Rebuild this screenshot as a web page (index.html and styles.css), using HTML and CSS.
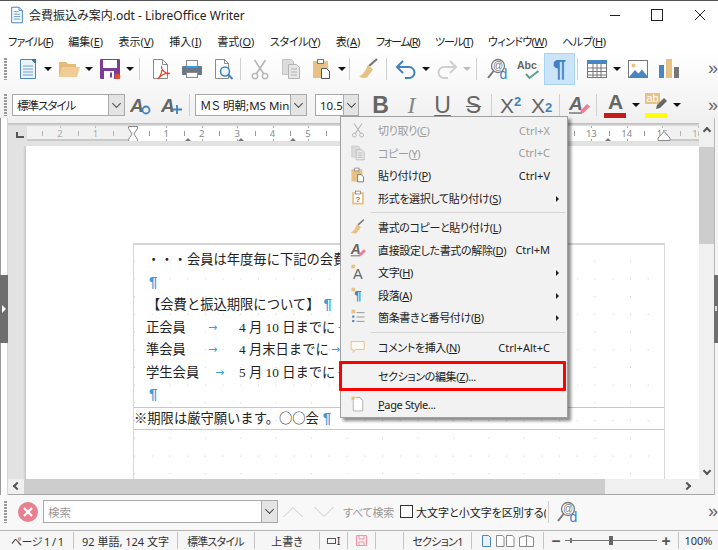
FILE: index.html
```html
<!DOCTYPE html>
<html lang="ja">
<head>
<meta charset="utf-8">
<title>会費振込み案内.odt - LibreOffice Writer</title>
<link rel="stylesheet" href="styles.css">
</head>
<body>
<svg class="defs" width="0" height="0" aria-hidden="true">
  <symbol id="i-new" viewBox="0 0 22 22"><path d="M3.5 1.5h11l4 4v15h-15z" fill="#eaf2fa" stroke="#4a86c0"/><path d="M14 1h5v5z" fill="#3b74ae"/><path d="M6 8h10M6 11h10M6 14h10M6 17h10" stroke="#6f9ecb" fill="none"/></symbol>
  <symbol id="i-open" viewBox="0 0 22 22"><path d="M1 4h7l2 2h8v13H1z" fill="#e6bb7a"/><path d="M4 9h18l-3 10H1z" fill="#f0cd96"/></symbol>
  <symbol id="i-save" viewBox="0 0 22 22"><rect x="1" y="1" width="20" height="20" rx="1" fill="#7c3e95"/><rect x="4" y="2" width="14" height="8" fill="#fff"/><rect x="5" y="13" width="10" height="8" fill="#fff"/><rect x="11" y="14.500" width="2" height="5" fill="#7c3e95"/><circle cx="18.500" cy="18.500" r="2.800" fill="#e2502a"/></symbol>
  <symbol id="i-pdf" viewBox="0 0 22 22"><path d="M3.500 1.500h9l5 5v14h-14z" fill="#fff" stroke="#8a8a8a"/><path d="M12.500 1.500v5h5" fill="none" stroke="#8a8a8a"/><path d="M8 21C13 15 12 10 11.500 9 11 11 15 16 20 15.500 15 15 11 17 8 21z" fill="none" stroke="#d9492c" stroke-width="1.200"/></symbol>
  <symbol id="i-print" viewBox="0 0 22 22"><rect x="5.500" y="2.500" width="11" height="7" fill="#fff" stroke="#8a8a8a"/><rect x="1" y="8" width="20" height="9" rx="1" fill="#6a7985"/><rect x="5" y="8" width="12" height="2" fill="#3f9bd8"/><rect x="5.500" y="14.500" width="11" height="5" fill="#fff" stroke="#8a8a8a"/></symbol>
  <symbol id="i-prev" viewBox="0 0 22 22"><path d="M3.500 1.500h9l4 4v15h-13z" fill="#fff" stroke="#8a8a8a"/><path d="M12.500 1.500v4h4" fill="none" stroke="#8a8a8a"/><circle cx="13" cy="13.500" r="4.500" fill="#eef6fc" stroke="#3f82c4" stroke-width="1.500"/><path d="M16.500 17l4 4" stroke="#3f82c4" stroke-width="2"/></symbol>
  <symbol id="i-cut" viewBox="0 0 22 22"><circle cx="6" cy="18" r="2.700" fill="none" stroke="#b4b4b4" stroke-width="1.300"/><circle cx="16" cy="18" r="2.700" fill="none" stroke="#b4b4b4" stroke-width="1.300"/><path d="M7.500 15.500L16.500 2M14.500 15.500L5.500 2" stroke="#b4b4b4" stroke-width="1.500"/></symbol>
  <symbol id="i-copy" viewBox="0 0 22 22"><path d="M2.500 1.500h9l2 2v13h-11z" fill="#dcdcdc" stroke="#c4c4c4"/><path d="M8.500 6.500h8l3 3v11h-11z" fill="#e6e6e6" stroke="#b4b4b4"/><path d="M11 11h6M11 14h6M11 17h6" stroke="#b4b4b4"/></symbol>
  <symbol id="i-paste" viewBox="0 0 22 22"><rect x="2" y="3" width="15" height="17" fill="#e8c185"/><rect x="6.500" y="1.500" width="6" height="4" fill="#fff" stroke="#777"/><path d="M10.500 10.500h5l3 3v7h-8z" fill="#fff" stroke="#555"/></symbol>
  <symbol id="i-brush" viewBox="0 0 22 22"><path d="M19 1l-8 7" stroke="#777" stroke-width="2.200" fill="none"/><path d="M10 6.500l5 5-6 8c-3 1-7 .5-8-1.500 3 0 6-4 9-11.500z" fill="#e8c185"/></symbol>
  <symbol id="i-undo" viewBox="0 0 22 22"><path d="M8 3L2 9l6 6M2 9h12a5.500 5.500 0 0 1 0 11h-4" fill="none" stroke="#3f82c4" stroke-width="2"/></symbol>
  <symbol id="i-redo" viewBox="0 0 22 22"><path d="M14 3l6 6-6 6M20 9H8a5.500 5.500 0 0 0 0 11h4" fill="none" stroke="#cfcfcf" stroke-width="2"/></symbol>
  <symbol id="i-table" viewBox="0 0 22 22"><rect x="1.500" y="2.500" width="19" height="17" fill="#fff" stroke="#777"/><rect x="1" y="2" width="20" height="4" fill="#4a86c0"/><path d="M1 10h20M1 13.500h20M1 17h20M7 6v13M11 6v13M15 6v13" stroke="#777" fill="none"/></symbol>
  <symbol id="i-image" viewBox="0 0 22 22"><rect x="1.500" y="2.500" width="19" height="17" fill="#fff" stroke="#777"/><circle cx="6.500" cy="7.500" r="2" fill="#e8c185"/><path d="M2 19l6-7 3.500 3.500 3.500-4 6 7.500z" fill="#4a86c0"/></symbol>
  <symbol id="i-chart" viewBox="0 0 22 22"><rect x="1" y="7" width="5" height="13" fill="#4a86c0"/><rect x="8" y="1" width="6" height="19" fill="#e8c185"/><rect x="16" y="9" width="5" height="11" fill="#777"/></symbol>
  <symbol id="i-list" viewBox="0 0 22 22"><rect x="2" y="1" width="5" height="5" fill="#e8c185"/><path d="M9 5h11M9 11h11M9 17h11" stroke="#777"/><rect x="3" y="9" width="3" height="3" fill="#4a86c0"/><rect x="3" y="15" width="3" height="3" fill="#4a86c0"/></symbol>
  <symbol id="i-note" viewBox="0 0 22 22"><path d="M1.500 3.500h18v11h-12l-3 4v-4h-3z" fill="#fdfaf3" stroke="#e8c185" stroke-width="1.300"/></symbol>
  <symbol id="i-page" viewBox="0 0 22 22"><rect x="2" y="1" width="5" height="5" fill="#e8c185"/><path d="M4.500 6.500v14h13v-14l-4-4.500h-6" fill="#fff" stroke="#999"/></symbol>
  <symbol id="i-doc" viewBox="0 0 22 22"><path d="M4.500 1.500h9l4 4v15h-13z" fill="#fff" stroke="#3f82c4" stroke-width="1.200"/><path d="M13.500 1.500v4h4" fill="#bcd7ef" stroke="#3f82c4"/><path d="M7 7h6M7 10h8M7 13h8M7 16h8" stroke="#3f82c4"/></symbol>
</svg>

<div class="win">
  <header class="title">
    <svg class="title-ic"><use href="#i-doc"/></svg>
    <span class="title-text">会費振込み案内.odt - LibreOffice Writer</span>
    <div class="winctl">
      <span class="wc wc-min"></span>
      <span class="wc wc-max"></span>
      <span class="wc wc-close">
        <svg width="12" height="12" viewBox="0 0 12 12"><path d="M1 1l10 10M11 1L1 11" stroke="#222" fill="none"/></svg>
      </span>
    </div>
  </header>

  <nav class="menubar">
    <span class="k8">ファイル(<u>F</u>)</span><span>編集(<u>E</u>)</span><span>表示(<u>V</u>)</span><span>挿入(<u>I</u>)</span><span>書式(<u>O</u>)</span><span class="k3">スタイル(<u>Y</u>)</span><span>表(<u>A</u>)</span><span class="k12">フォーム(<u>R</u>)</span><span class="k11">ツール(<u>T</u>)</span><span class="k6">ウィンドウ(<u>W</u>)</span><span class="k5">ヘルプ(<u>H</u>)</span>
  </nav>

  <div class="bars">
    <div class="toolbar t1">
      <i class="grip"></i>
      <span class="ic"><svg><use href="#i-new"/></svg></span><b class="ar"></b>
      <span class="ic"><svg><use href="#i-open"/></svg></span><b class="ar"></b>
      <span class="ic"><svg><use href="#i-save"/></svg></span><b class="ar"></b>
      <i class="sep wide"></i>
      <span class="ic"><svg><use href="#i-pdf"/></svg></span>
      <span class="ic"><svg><use href="#i-print"/></svg></span>
      <span class="ic"><svg><use href="#i-prev"/></svg></span>
      <i class="sep"></i>
      <span class="ic"><svg><use href="#i-cut"/></svg></span>
      <span class="ic"><svg><use href="#i-copy"/></svg></span>
      <span class="ic"><svg><use href="#i-paste"/></svg></span><b class="ar"></b>
      <i class="sep"></i>
      <span class="ic"><svg><use href="#i-brush"/></svg></span>
      <i class="sep"></i>
      <span class="ic"><svg><use href="#i-undo"/></svg></span><b class="ar"></b>
      <span class="ic"><svg><use href="#i-redo"/></svg></span><b class="ar dis"></b>
      <i class="sep wide"></i>
      <span class="ic"><svg viewBox="0 0 22 22"><circle cx="11" cy="8" r="6.500" fill="#fff" stroke="#777" stroke-width="1.300"/><path d="M6.500 13L1 20" stroke="#777" stroke-width="2"/><text x="11" y="11" text-anchor="middle" class="svg-at">@</text><text x="16.500" y="21" text-anchor="middle" class="svg-d">d</text></svg></span>
      <span class="ic"><svg class="wide-ic" viewBox="0 0 24 22"><text x="0" y="11" class="svg-abc">Abc</text><path d="M9 16l3.500 4 9-7" fill="none" stroke="#5aa08a" stroke-width="2"/></svg></span>
      <span class="ic on"><span class="pil">¶</span></span>
      <i class="sep"></i>
      <span class="ic"><svg><use href="#i-table"/></svg></span><b class="ar"></b>
      <span class="ic"><svg><use href="#i-image"/></svg></span>
      <span class="ic"><svg><use href="#i-chart"/></svg></span>
      <span class="more">»</span>
    </div>
    <div class="toolbar t2">
      <i class="grip"></i>
      <div class="combo c-style"><span class="combo-t">標準スタイル</span><span class="combo-b"></span></div>
      <span class="ic"><svg viewBox="0 0 22 22"><text x="0" y="18" class="svg-a">A</text><circle cx="16" cy="16" r="3.500" fill="none" stroke="#3f82c4" stroke-width="1.800"/></svg></span>
      <span class="ic"><svg viewBox="0 0 22 22"><text x="0" y="18" class="svg-a">A</text><path d="M16 11v9M12 15.500h9" stroke="#3f82c4" stroke-width="1.800"/></svg></span>
      <i class="sep"></i>
      <div class="combo c-font"><span class="combo-t">ＭＳ 明朝;MS Mincho</span><span class="combo-b"></span></div>
      <div class="combo c-size"><span class="combo-t">10.5</span><span class="combo-b"></span></div>
      <span class="ic fmt f-b">B</span>
      <span class="ic fmt f-i">I</span>
      <span class="ic fmt f-u">U</span>
      <span class="ic fmt f-s">S</span>
      <i class="sep"></i>
      <span class="ic fmt f-x">X<sup>2</sup></span>
      <span class="ic fmt f-x">X<sub>2</sub></span>
      <i class="sep"></i>
      <span class="ic"><svg viewBox="0 0 22 22"><text x="1" y="16" class="svg-a">A</text><path d="M1 19h13" stroke="#666" stroke-width="1.300"/><path d="M12 17l7-7 3 2.500-7 7z" fill="#ef7d92"/></svg></span>
      <i class="sep"></i>
      <span class="ic colorbtn"><span class="fc">A</span><span class="bar bar-red"></span></span><b class="ar"></b>
      <span class="ic colorbtn"><span class="hl">ab</span><svg class="pen" width="14" height="14" viewBox="0 0 14 14"><path d="M2 12l1-4 7-7 3 3-7 7z" fill="#666"/></svg><span class="bar bar-yel"></span></span><b class="ar"></b>
      <span class="more">»</span>
    </div>
  </div>

  <div class="work">
    <div class="edge edge-l"><span class="hand"><span class="tri-r"></span></span></div>
    <div class="center">
      <div class="upper">
        <div class="doccol">
          <div class="rulerrow">
            <span class="corner"></span>
            <div class="ruler">
              <span class="rc">2</span><span class="rc">1</span><span class="rc z"></span><span class="rc">1</span><span class="rc">2</span><span class="rc">3</span><span class="rc">4</span><span class="rc">5</span><span class="rc"></span><span class="rc"></span><span class="rc"></span><span class="rc"></span><span class="rc"></span><span class="rc"></span><span class="rc"></span><span class="rc">13</span><span class="rc">14</span><span class="rc">15</span><span class="rc">16</span>
              <span class="rmask rmask-l"></span><span class="rmask rmask-r"></span>
              <svg class="rmark rm-hour" width="10" height="16" viewBox="0 0 10 16"><path d="M.5.5h9v2L6 8l3.500 5.500v2h-9v-2L4 8 .5 2.500z" fill="#fff" stroke="#888"/></svg>
              <span class="tab t-a"></span><span class="tab t-b"></span><span class="tab t-c"></span><span class="tab t-d"></span>
              <svg class="rmark rm-right" width="14" height="10" viewBox="0 0 14 10"><path d="M1 9.500V7L7 .5 13 7v2.500z" fill="#fff" stroke="#888"/></svg>
            </div>
          </div>
          <div class="pagerow">
            <div class="gutter"></div>
            <div class="page">
              <div class="frame">
                <svg class="dots" width="100%" height="100%">
                  <defs>
                    <pattern id="dotgrid" width="35.43" height="35.43" patternUnits="userSpaceOnUse">
                      <rect x="0" y="0" width="1" height="1" fill="#c9c9c9"/><rect x="17.71" y="0" width="1" height="1" fill="#c9c9c9"/><rect x="0" y="17.71" width="1" height="1" fill="#c9c9c9"/>
                    </pattern>
                  </defs>
                  <rect width="100%" height="100%" fill="url(#dotgrid)"/>
                </svg>
                <section class="body">
                  <p class="ln ind">・・・会員は年度毎に下記の会費</p>
                  <p class="ln ind pad"><span class="pm">¶</span></p>
                  <p class="ln ind">【会費と振込期限について】<span class="pm sp">¶</span></p>
                  <p class="ln row"><span class="lab">正会員</span><span class="arr">→</span><span>4 月 10 日までに</span><span class="arr2">→</span></p>
                  <p class="ln row"><span class="lab">準会員</span><span class="arr">→</span><span>4 月末日までに</span><span class="arr2">→</span></p>
                  <p class="ln row"><span class="lab lab-w">学生会員</span><span class="arr arr-n">→</span><span>5 月 10 日までに</span><span class="arr2">→</span></p>
                  <p class="ln ind pad"><span class="pm">¶</span></p>
                </section>
                <footer class="foot">※期限は厳守願います。<span class="cjk">○○</span>会<span class="pm sp">¶</span></footer>
              </div>
            </div>
          </div>
        </div>
        <div class="vscroll">
          <span class="chev up"></span>
          <span class="vthumb"></span>
          <span class="chev down"></span>
        </div>
      </div>
      <div class="hscroll">
        <span class="hend"><span class="chev left"></span></span>
        <span class="hthumb"></span>
        <span class="hrest"><span class="chev right"></span></span>
      </div>
    </div>
    <div class="edge edge-r"><span class="hand"><span class="tri-dot"></span></span></div>
  </div>

  <div class="findbar">
    <i class="grip"></i>
    <span class="closex"><svg width="20" height="20" viewBox="0 0 20 20"><circle cx="10" cy="10" r="10" fill="#e9808f"/><path d="M6 6l8 8M14 6l-8 8" stroke="#fff" stroke-width="2.200"/></svg></span>
    <div class="combo c-find"><span class="combo-t ph">検索</span><span class="combo-b"></span></div>
    <svg class="nav nav-a" width="20" height="12" viewBox="0 0 20 12"><path d="M.5 11L10 1.500 19.500 11" fill="none" stroke="#c8c8c8"/></svg>
    <svg class="nav nav-b" width="20" height="12" viewBox="0 0 20 12"><path d="M.5 1L10 10.500 19.500 1" fill="none" stroke="#c8c8c8"/></svg>
    <span class="findall">すべて検索</span>
    <span class="check"></span>
    <span class="matchcase">大文字と小文字を区別する(</span>
    <i class="sep"></i>
    <span class="ic ic-find"><svg viewBox="0 0 22 22"><circle cx="11" cy="8" r="6.500" fill="#fff" stroke="#777" stroke-width="1.300"/><path d="M6.500 13L1 20" stroke="#777" stroke-width="2"/><text x="11" y="11" text-anchor="middle" class="svg-at">@</text><text x="16.500" y="21" text-anchor="middle" class="svg-d">d</text></svg></span>
    <span class="more">»</span>
  </div>

  <footer class="status">
    <span class="st s1">ページ 1 / 1</span>
    <span class="st s2">92 単語, 124 文字</span>
    <span class="st s3">標準スタイル</span>
    <span class="st s4">上書き</span>
    <span class="st s5"><span class="sel-a"></span><span class="sel-b">I</span></span>
    <span class="st s6"><svg width="11" height="11" viewBox="0 0 11 11"><path d="M.5.500h10v10H.5z" fill="#fdeef1" stroke="#ef95a8"/><path d="M3 1v3h5V1M3 10V7h5v3" fill="none" stroke="#ef95a8"/></svg></span>
    <span class="st s7"></span>
    <span class="st s8">セクション1</span>
    <span class="st s9">
      <svg width="54" height="12" viewBox="0 0 54 12"><path d="M1.500.500h6l2 2v9h-8z" fill="#eaf2fa" stroke="#4a86c0"/><path d="M15.500.500h6l1.500 2v9h-7.500zM25.500.500h6l1.500 2v9h-7.500z" fill="#fff" stroke="#888"/><path d="M38.500 2.500l7-2v11h-7zM45.500.500l7 2v9l-7 0z" fill="#fff" stroke="#888"/></svg>
    </span>
    <span class="st s10">
      <span class="zm">−</span>
      <span class="slider"><span class="sl-tick"></span><span class="sl-thumb"></span></span>
      <span class="zm">+</span>
    </span>
    <span class="st s11">100%</span>
  </footer>

  <div class="ctx">
    <div class="mi dis"><svg class="mic"><use href="#i-cut"/></svg><span class="ml">切り取り(<u>C</u>)</span><span class="ms">Ctrl+X</span></div>
    <div class="mi dis"><svg class="mic"><use href="#i-copy"/></svg><span class="ml">コピー(<u>Y</u>)</span><span class="ms">Ctrl+C</span></div>
    <div class="mi"><svg class="mic"><use href="#i-paste"/></svg><span class="ml">貼り付け(<u>P</u>)</span><span class="ms">Ctrl+V</span></div>
    <div class="mi sub"><svg class="mic" viewBox="0 0 22 22"><rect x="3" y="3" width="16" height="17" fill="#e8c185"/><rect x="5.500" y="5.500" width="11" height="12" fill="#fff"/><rect x="7.500" y="1.500" width="7" height="4" fill="#fff" stroke="#777"/><text x="11" y="16.500" text-anchor="middle" class="svg-q">?</text></svg><span class="ml">形式を選択して貼り付け(<u>S</u>)</span></div>
    <div class="msep"></div>
    <div class="mi"><svg class="mic"><use href="#i-brush"/></svg><span class="ml">書式のコピーと貼り付け(<u>L</u>)</span></div>
    <div class="mi"><svg class="mic" viewBox="0 0 22 22"><text x="1" y="16" class="svg-a">A</text><path d="M1 19h13" stroke="#666" stroke-width="1.300"/><path d="M12 17l7-7 3 2.500-7 7z" fill="#ef7d92"/></svg><span class="ml">直接設定した書式の解除(<u>D</u>)</span><span class="ms">Ctrl+M</span></div>
    <div class="mi sub"><svg class="mic" viewBox="0 0 22 22"><rect x="2" y="1" width="5" height="5" fill="#e8c185"/><text x="4" y="20" class="svg-ch">A</text></svg><span class="ml">文字(<u>H</u>)</span></div>
    <div class="mi sub"><svg class="mic" viewBox="0 0 22 22"><rect x="2" y="1" width="5" height="5" fill="#e8c185"/><text x="6" y="18" class="svg-pa">¶</text></svg><span class="ml">段落(<u>A</u>)</span></div>
    <div class="mi sub"><svg class="mic"><use href="#i-list"/></svg><span class="ml">箇条書きと番号付け(<u>B</u>)</span></div>
    <div class="msep msep2"></div>
    <div class="mi"><svg class="mic"><use href="#i-note"/></svg><span class="ml">コメントを挿入(<u>N</u>)</span><span class="ms">Ctrl+Alt+C</span></div>
    <div class="msep msep3"></div>
    <div class="mi"><span class="mic"></span><span class="ml">セクションの編集(<u>Z</u>)...</span></div>
    <div class="msep msep3"></div>
    <div class="mi"><svg class="mic"><use href="#i-page"/></svg><span class="ml"><u>P</u>age Style...</span></div>
  </div>
  <div class="redbox"></div>
</div>
</body>
</html>
```
FILE: styles.css
```css
* { box-sizing: border-box; }
html, body { margin: 0; padding: 0; }
body {
  width: 718px; height: 550px; overflow: hidden; background: #fff; color: #222;
  font-family: "Noto Sans", "Noto Sans CJK JP", sans-serif;
  font-size: 11px; font-feature-settings: "palt";
}
.defs { position: absolute; }
.svg-q { font: bold 11px "Liberation Sans", sans-serif; fill: #d9492c; }
.svg-at { font: 10px "Liberation Sans", sans-serif; fill: #777; }
.svg-d { font: 14px "Liberation Sans", sans-serif; fill: #3f82c4; }
.svg-abc { font: bold 10.5px "Liberation Sans", sans-serif; fill: #666; }
.svg-a { font: italic bold 19px "Liberation Sans", sans-serif; fill: #666; }
.svg-ch { font: 20px "Liberation Sans", sans-serif; fill: #666; }
.svg-pa { font: bold 18px "Liberation Sans", sans-serif; fill: #3f82c4; }

.win { position: relative; width: 718px; height: 550px; display: flex; flex-direction: column; border-top: 1px solid #555; overflow: hidden; }

/* title */
.title { height: 28px; display: flex; align-items: center; padding-left: 8px; background: #fff; flex: none; }
.title-ic { width: 18px; height: 20px; margin-right: 3px; flex: none; }
.title-text { font-size: 12px; color: #222; }
.winctl { margin-left: auto; margin-right: -3px; display: flex; height: 26px; }
.wc { width: 42.500px; display: flex; align-items: center; justify-content: center; }
.wc-min::before { content: ""; width: 10px; height: 1px; background: #222; }
.wc-max::before { content: ""; width: 10px; height: 10px; border: 1px solid #222; }

/* menu */
.menubar { height: 23px; flex: none; display: flex; align-items: center; gap: 15.500px; padding-left: 8px; background: #fff; font-size: 11px; }
.k3 { letter-spacing: -.3px; }
.k5 { letter-spacing: -.5px; }
.k6 { letter-spacing: -.6px; }
.k8 { letter-spacing: -.8px; }
.k11 { letter-spacing: -1.1px; }
.k12 { letter-spacing: -1.200px; }

/* toolbars */
.bars { flex: none; height: 66px; background: linear-gradient(#fff, #f1f1f1); display: flex; flex-direction: column; }
.toolbar { display: flex; align-items: center; padding-left: 4px; }
.t1 { height: 36px; padding-bottom: 3px; }
.t2 { height: 30px; padding-top: 4px; }
.grip { width: 3px; height: 22px; margin-right: 5px; flex: none; background: repeating-linear-gradient(#9a9a9a 0 2px, transparent 2px 3px); }
.ic { width: 31px; height: 26px; flex: none; display: flex; align-items: center; justify-content: center; position: relative; }
.ic svg { width: 22px; height: 22px; }
.ic .wide-ic { width: 24px; }
.on { height: 32px; background: #cce4f7; border: 1px solid #a8d3f5; }
.pil { font: bold 24px "Liberation Sans", sans-serif; color: #3f82c4; line-height: 1; }
.ar { width: 10px; height: 10px; flex: none; position: relative; display: block; }
.ar::before { content: ""; position: absolute; left: 1px; top: 3px; border: 4px solid transparent; border-top-color: #111; border-bottom: 0; }
.ar.dis::before { border-top-color: #bbb; }
.sep { width: 6px; height: 22px; flex: none; position: relative; display: block; }
.sep::before { content: ""; position: absolute; left: 2px; top: 0; bottom: 0; width: 1px; background: #d0d0d0; }
.sep.wide { width: 10px; }
.sep.wide::before { left: 4px; }
.more { margin-left: auto; margin-right: -3px; font: 18px "Liberation Sans", sans-serif; color: #666; width: 13px; }

.combo { height: 22px; display: flex; align-items: center; border: 1px solid #a9a9a9; background: #fff; flex: none; font-size: 11.500px; }
.combo-t { flex: 1; min-width: 0; overflow: hidden; white-space: nowrap; padding-left: 4px; }
.combo-b { width: 16px; height: 20px; flex: none; position: relative; background: #e4e4e4; border-left: 1px solid #a9a9a9; }
.combo-b::before { content: ""; position: absolute; left: 4px; top: 5px; width: 6px; height: 6px; border-right: 1px solid #444; border-bottom: 1px solid #444; transform: rotate(45deg) scale(.9); }
.c-style { width: 113px; }
.c-style .combo-t { letter-spacing: -1px; }
.c-font { width: 112px; margin-left: 2px; }
.c-size { width: 44px; margin-left: 8px; margin-right: 6px; }
.c-size .combo-b { width: 15px; }
.fmt { font-family: "Liberation Sans", sans-serif; color: #666; font-size: 23px; line-height: 1; }
.f-b { font-weight: bold; }
.f-i { font-family: "Liberation Serif", serif; font-style: italic; font-size: 24px; color: #888; }
.f-u { text-decoration: underline; text-decoration-thickness: 2px; text-underline-offset: 2px; }
.f-s { text-decoration: line-through; text-decoration-thickness: 1px; }
.f-x { font-size: 21px; }
.f-x sup, .f-x sub { font-size: 13px; color: #3f82c4; font-weight: bold; line-height: 0; }
.f-x sup { position: relative; top: -3px; vertical-align: super; }
.f-x sub { vertical-align: sub; position: relative; top: 3px; }
.colorbtn { flex-direction: column; justify-content: flex-start; height: 26px; }
.fc { font: bold 21px/20px "Liberation Sans", sans-serif; color: #666; height: 20px; }
.bar { width: 22px; height: 5px; position: absolute; left: 4px; bottom: 0; }
.bar-red { background: #c51c1c; }
.bar-yel { background: #ffff00; }
.hl { position: absolute; left: 4px; top: 1px; width: 15px; height: 11px; background: #e8c185; color: #fff; font: 11px/10px "Liberation Sans", sans-serif; text-align: center; }
.pen { position: absolute; left: 13px; top: 5px; width: 14px !important; height: 14px !important; }

/* work area */
.work { flex: none; height: 377px; display: flex; background: #f0f0f0; }
.edge { flex: none; position: relative; }
.edge-l { width: 8px; background: #fff; border-left: 1px solid #9a9a9a; border-right: 1px solid #d4d4d4; }
.edge-r { width: 4px; background: #f4f4f4; border-left: 1px solid #b8b8b8; }
.hand { position: absolute; top: 157px; height: 68px; background: #6e6e6e; left: -1px; right: 0; }
.edge-l .hand { right: -1px; }
.tri-r { position: absolute; left: 2px; top: 30px; border: 4px solid transparent; border-left-color: #fff; border-right: 0; }
.tri-dot { position: absolute; left: 1px; top: 31px; width: 2px; height: 5px; background: #ddd; }
.center { flex: 1; display: flex; flex-direction: column; min-width: 0; border-top: 5px solid #f0f0f0; }
.upper { flex: 1; display: flex; min-height: 0; }
.doccol { flex: 1; display: flex; flex-direction: column; min-width: 0; }
.rulerrow { height: 23px; flex: none; display: flex; background: linear-gradient(#b9b9b9, #e2e2e2 3px, #e2e2e2); padding-top: 3px; }
.corner { width: 19px; flex: none; position: relative; }
.corner::before { content: ""; position: absolute; left: 8px; top: 6px; width: 6px; height: 4px; border-left: 2px solid #555; border-bottom: 2px solid #555; }
.ruler { position: relative; flex: 1; height: 15px; background: #fff; display: flex; padding-left: 15.300px; overflow: hidden; color: #8a8a8a; font-size: 9.500px; line-height: 15px; }
.rc { width: 35.430px; flex: none; text-align: center; position: relative; }
.rc::before { content: ""; position: absolute; left: 0; top: 5px; height: 5px; width: 1px; background: #999; }
.rc::after { content: ""; position: absolute; left: 50%; top: 0; bottom: 0; width: 1px; background: linear-gradient(#aaa 0 2px, transparent 2px 13px, #aaa 13px); }
.rmask { position: absolute; top: 0; bottom: 0; background: rgba(220,220,220,.4); border-bottom: 2px solid #c9c9c9; }
.rmask-l { left: 0; width: 106px; }
.rmask-r { right: 0; width: 35px; }
.rmark { position: absolute; }
.rm-hour { left: 101px; top: 0; }
.rm-right { left: 630px; top: 5px; }
.tab { position: absolute; bottom: 0; width: 0; height: 0; border: 3px solid transparent; border-bottom-color: #777; border-top: 0; }
.t-a { left: 158px; }
.t-b { left: 211px; }
.t-c { left: 263px; }
.t-d { left: 578px; }

.pagerow { flex: 1; display: flex; min-height: 0; }
.gutter { width: 18px; flex: none; background: linear-gradient(90deg, #e2e2e2 15px, #c4c4c4); }
.page { flex: 1; background: #fff; padding: 97px 34px 0 107px; min-width: 0; overflow: hidden; }
.frame { position: relative; height: 100%; border-left: 1px solid #d8d8d8; border-right: 1px solid #d8d8d8; font-family: "Liberation Serif", "Noto Sans CJK JP", serif; font-feature-settings: normal; }
.dots { position: absolute; inset: 0; display: block; }
.body { position: relative; height: 164px; border-top: 2px solid #d4d4d4; padding-top: 4px; font-size: 13.300px; color: #222; }
.ln { margin: 0; height: 22.500px; line-height: 22.500px; white-space: nowrap; }
.ind { padding-left: 13px; }
.pad { padding-left: 15px; }
.row { display: flex; padding-left: 12px; }
.lab { width: 62px; }
.lab-w { width: 69px; }
.arr { width: 31px; color: #3f9bd8; font: 11px/22.500px "DejaVu Sans", sans-serif; }
.arr-n { width: 24px; }
.arr2 { color: #3f9bd8; font: 11px/22.500px "DejaVu Sans", sans-serif; margin-left: 2px; }
.pm { color: #3f9bd8; font: bold 15px "Liberation Sans", sans-serif; }
.sp { margin-left: 4px; }
.cjk { font-family: "Noto Sans CJK JP", sans-serif; }
.foot { position: relative; height: 23px; line-height: 20px; border-top: 1px solid #c8c8c8; border-bottom: 1px solid #c8c8c8; font-size: 13.300px; white-space: nowrap; }

.vscroll { width: 15px; flex: none; background: #f0f0f0; display: flex; flex-direction: column; align-items: stretch; position: relative; padding-top: 24px; }
.vthumb { height: 97px; background: #cdcdcd; }
.chev { position: absolute; width: 6px; height: 6px; border-top: 2px solid #555; border-left: 2px solid #555; }
.chev.up { left: 5px; top: 5px; transform: rotate(45deg); }
.chev.down { left: 5px; bottom: 5px; transform: rotate(225deg); }
.hscroll { flex: none; height: 16px; display: flex; border-bottom: 1px solid #a6a6a6; background: #f0f0f0; }
.hend { width: 16px; flex: none; position: relative; }
.hthumb { width: 581px; flex: none; background: #cdcdcd; }
.hrest { flex: 1; position: relative; }
.chev.left { left: 6px; top: 4px; transform: rotate(-45deg); }
.chev.right { right: 24px; top: 4px; transform: rotate(135deg); }

/* find bar */
.findbar { flex: none; height: 36px; display: flex; align-items: center; padding: 0 0 2px 4px; background: #f8f8f8; border-bottom: 1px solid #b4b4b4; }
.findbar .grip { margin-right: 11px; }
.closex { display: flex; margin-right: 5px; }
.c-find { width: 235px; height: 23px; margin-right: 5px; }
.c-find .combo-b { height: 21px; }
.ph { color: #999; font-size: 11.500px; }
.nav-a { margin-right: 11px; }
.nav-b { margin-right: 9px; }
.findall { color: #999; font-size: 11px; margin-right: 7px; width: 50px; white-space: nowrap; letter-spacing: -.2px; }
.check { width: 13px; height: 13px; border: 1px solid #333; background: #fff; margin-right: 3px; flex: none; }
.matchcase { font-size: 11px; color: #222; width: 130px; white-space: nowrap; overflow: hidden; }
.ic-find { margin-left: 3px; width: 25px; }

/* status */
.status { flex: 1; display: flex; background: #f6f6f6; font-size: 11px; color: #333; min-height: 0; }
.st { display: flex; align-items: center; justify-content: center; border-right: 1px solid #c4c4c4; flex: none; white-space: nowrap; margin: 1px 0; }
.s1 { width: 74px; justify-content: flex-start; padding-left: 11px; letter-spacing: -.6px; }
.s2 { width: 104px; }
.s3 { width: 77px; justify-content: flex-start; padding-left: 9px; letter-spacing: -.8px; }
.s4 { width: 65px; }
.s5 { width: 28px; gap: 1px; }
.sel-a { width: 9px; height: 6px; border: 1px solid #555; }
.sel-b { font-size: 11px; line-height: 1; }
.s6 { width: 28px; }
.s7 { width: 28px; }
.s8 { width: 68px; letter-spacing: -.7px; }
.s9 { width: 72px; }
.s10 { width: 135px; gap: 4px; justify-content: flex-start; padding-left: 7px; }
.s11 { flex: 1; border-right: 0; }
.zm { font-size: 16px; line-height: 1; font-weight: bold; color: #555; width: 10px; text-align: center; }
.slider { width: 92px; height: 1px; background: #777; position: relative; }
.sl-tick { position: absolute; left: 5px; top: -2px; width: 2px; height: 5px; background: #777; }
.sl-thumb { position: absolute; left: 44px; top: -4px; width: 4px; height: 9px; background: #666; }

/* context menu */
.ctx { position: absolute; left: 340px; top: 115px; width: 228px; height: 302px; padding-top: 2px; background: #f2f2f2; border: 1px solid #a0a0a0; box-shadow: 3px 3px 3px rgba(0,0,0,.45); font-size: 11px; color: #222; }
.mi { height: 22.500px; display: flex; align-items: center; padding-right: 17px; position: relative; }
.mic { width: 16px; height: 16px; margin-left: 9px; margin-right: 12px; flex: none; display: block; }
.ml { flex: 1; white-space: nowrap; letter-spacing: -.35px; }
.ms { white-space: nowrap; }
.mi.dis { color: #9c9c9c; }
.sub::after { content: ""; position: absolute; right: 8px; top: 9px; border: 3px solid transparent; border-left-color: #222; border-right: 0; }
.msep { height: 7px; margin-left: 30px; margin-right: 2px; position: relative; }
.msep::before { content: ""; position: absolute; left: 0; right: 0; top: 3px; height: 1px; background: #d4d4d4; }
.msep2 { height: 7.500px; }
.msep3 { height: 6px; }
.redbox { position: absolute; left: 339px; top: 360px; width: 227px; height: 30px; border: 3px solid #f00; border-radius: 1px; }
```
